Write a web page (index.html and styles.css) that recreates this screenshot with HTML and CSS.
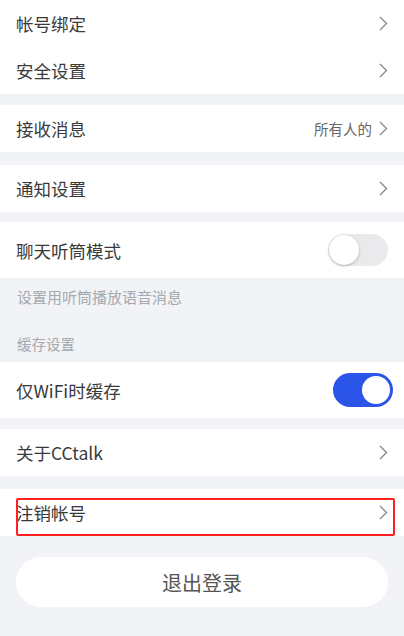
FILE: index.html
```html
<!DOCTYPE html>
<html lang="zh-CN">
  <head>
    <meta charset="UTF-8" />
    <meta name="viewport" content="width=device-width, initial-scale=1.0" />
    <title>设置</title>
    <link rel="stylesheet" href="styles.css">
  </head>
  <body>
    <div class="group">
      <div class="row">
        <span>帐号绑定</span>
        <svg class="arrow" viewBox="0 0 9 15"><polyline points="1,1 7.5,7.5 1,14" /></svg>
      </div>
      <div class="row">
        <span>安全设置</span>
        <svg class="arrow" viewBox="0 0 9 15"><polyline points="1,1 7.5,7.5 1,14" /></svg>
      </div>
    </div>

    <div class="group gap-sm">
      <div class="row">
        <span>接收消息</span>
        <span class="extra">所有人的<svg class="arrow" viewBox="0 0 9 15"><polyline points="1,1 7.5,7.5 1,14" /></svg></span>
      </div>
    </div>

    <div class="group gap-lg">
      <div class="row">
        <span>通知设置</span>
        <svg class="arrow" viewBox="0 0 9 15"><polyline points="1,1 7.5,7.5 1,14" /></svg>
      </div>
    </div>

    <div class="group gap-xs">
      <div class="row tall">
        <span>聊天听筒模式</span>
        <span class="switch"></span>
      </div>
    </div>
    <div class="hint">设置用听筒播放语音消息</div>
    <div class="title">缓存设置</div>

    <div class="group">
      <div class="row tall">
        <span>仅WiFi时缓存</span>
        <span class="switch on"></span>
      </div>
    </div>

    <div class="group gap-sm">
      <div class="row">
        <span>关于CCtalk</span>
        <svg class="arrow" viewBox="0 0 9 15"><polyline points="1,1 7.5,7.5 1,14" /></svg>
      </div>
    </div>

    <div class="group gap-lg marked">
      <div class="row">
        <span>注销帐号</span>
        <svg class="arrow" viewBox="0 0 9 15"><polyline points="1,1 7.5,7.5 1,14" /></svg>
      </div>
      <div class="mark"></div>
    </div>

    <button class="logout">退出登录</button>
  </body>
</html>
```

FILE: styles.css
```css
body {
  margin: 0;
  padding: 0;
  background: #f2f3f6;
  color: #3a3a3a;
  font-family: "Noto Sans CJK SC", "Noto Sans", sans-serif;
}
.group {
  background: #fff;
}
.gap-xs {
  margin-top: 10px;
}
.gap-sm {
  margin-top: 11px;
}
.gap-lg {
  margin-top: 13px;
}
.row {
  height: 47px;
  padding: 0 16px 0 16px;
  display: flex;
  justify-content: space-between;
  align-items: center;
  font-size: 17.5px;
}
.row.tall {
  height: 56px;
}
.arrow {
  width: 9px;
  height: 15px;
  fill: none;
  stroke: #8a8a8a;
  stroke-width: 1.4;
}
.extra {
  display: flex;
  align-items: center;
  gap: 7px;
  font-size: 14.5px;
  color: #666;
}
.switch {
  position: relative;
  width: 60px;
  height: 32px;
  border-radius: 16px;
  background: #eaeaec;
}
.switch::after {
  content: "";
  position: absolute;
  left: 1px;
  top: 1px;
  width: 30px;
  height: 30px;
  border-radius: 50%;
  background: #fff;
  box-shadow: 0 1px 3px rgba(0, 0, 0, 0.25);
}
.switch.on {
  height: 34px;
  border-radius: 17px;
  background: #2b55e9;
  margin-right: -5px;
}
.switch.on::after {
  left: auto;
  right: 3px;
  top: 3px;
  width: 28px;
  height: 28px;
  box-shadow: none;
}
.hint {
  padding: 8px 17px;
  line-height: 22px;
  font-size: 15px;
  color: #a6a9ae;
}
.title {
  padding: 17px 17px 7px;
  line-height: 22px;
  font-size: 14.5px;
  color: #a6a9ae;
}
.marked {
  position: relative;
}
.mark {
  position: absolute;
  left: 16px;
  right: 9px;
  top: 9px;
  height: 34px;
  border: 2px solid #ff1f1f;
  border-radius: 2px;
}
.logout {
  all: unset;
  display: block;
  box-sizing: border-box;
  margin: 21px 16px 0;
  width: calc(100% - 32px);
  height: 50px;
  border-radius: 25px;
  background: #fff;
  text-align: center;
  font-size: 20px;
  color: #555;
  font-family: "Noto Sans CJK SC", "Noto Sans", sans-serif;
}
```
